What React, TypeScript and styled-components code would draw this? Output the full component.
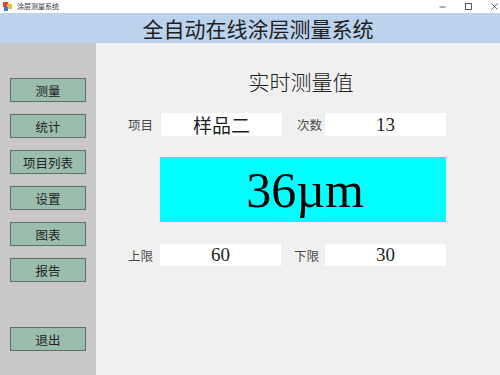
import React from "react";
import styled, { createGlobalStyle } from "styled-components";

const Global = createGlobalStyle`
  html, body { margin: 0; padding: 0; }
  body { width: 500px; height: 375px; overflow: hidden; background: #f0f0f0; }
  * { box-sizing: border-box; }
`;

const cjk = `"Noto Sans CJK SC", "Noto Sans", sans-serif`;
const serif = `"Liberation Serif", "Noto Sans CJK SC", serif`;

const Window = styled.div`
  width: 500px;
  height: 375px;
  display: flex;
  flex-direction: column;
  background: #f0f0f0;
`;

const TitleBar = styled.div`
  height: 13px;
  background: #ffffff;
  display: flex;
  align-items: center;
  padding-left: 3px;
  font-family: ${cjk};
  font-size: 7px;
  color: #333;
`;

const TitleText = styled.span`
  margin-left: 5px;
  line-height: 13px;
`;

const Controls = styled.div`
  margin-left: auto;
  display: flex;
  align-items: center;
  gap: 19px;
  padding-right: 2px;
`;

const Header = styled.div`
  height: 30px;
  background: #bcd3ee;
  display: flex;
  align-items: center;
  justify-content: center;
  font-family: ${cjk};
  font-size: 21px;
  color: #1e1e1e;
  padding-left: 16px;
`;

const Body = styled.div`
  flex: 1;
  display: flex;
`;

const Sidebar = styled.div`
  width: 96px;
  background: #c8c8c8;
  display: flex;
  flex-direction: column;
  padding: 35px 0 0 10px;
  gap: 12px;
`;

const NavButton = styled.div<{ $bottom?: boolean }>`
  width: 76px;
  height: 24px;
  background: #9bbdae;
  border: 1px solid #5f6d66;
  display: flex;
  align-items: center;
  justify-content: center;
  font-family: ${cjk};
  font-size: 12.5px;
  color: #222;
  margin-top: ${(p) => (p.$bottom ? "33px" : "0")};
`;

const Main = styled.div`
  flex: 1;
  display: flex;
  flex-direction: column;
  padding-top: 26px;
`;

const MainTitle = styled.div`
  height: 24px;
  line-height: 24px;
  text-align: center;
  font-family: ${cjk};
  font-weight: 300;
  font-size: 21px;
  color: #222;
  padding-left: 6px;
`;

const Row = styled.div<{ $top: number; $h: number }>`
  display: flex;
  align-items: center;
  margin-top: ${(p) => p.$top}px;
  height: ${(p) => p.$h}px;
  padding-left: 32px;
`;

const Label = styled.span<{ $w: number; $ml?: number }>`
  width: ${(p) => p.$w}px;
  margin-left: ${(p) => p.$ml ?? 0}px;
  font-family: ${cjk};
  font-size: 12.5px;
  color: #4a4a4a;
`;

const ValueBox = styled.div`
  width: 121px;
  height: 100%;
  background: #ffffff;
  display: flex;
  align-items: center;
  justify-content: center;
  font-family: ${serif};
  font-size: 19px;
  color: #1e1e1e;
`;

const BigBox = styled.div`
  margin-top: 21px;
  margin-left: 64px;
  width: 286px;
  height: 65px;
  background: #00ffff;
  display: flex;
  align-items: center;
  justify-content: center;
  font-family: ${serif};
  font-size: 50px;
  color: #000;
  padding-left: 4px;
`;

const AppIcon = () => (
  <svg width="9" height="9" viewBox="0 0 9 9">
    <rect x="0" y="0" width="5" height="5" fill="#e8413a" />
    <rect x="4" y="2" width="5" height="5" fill="#f3c22b" />
    <rect x="1" y="5" width="4" height="4" fill="#3c78d8" />
  </svg>
);

const nav = ["测量", "统计", "项目列表", "设置", "图表", "报告"];

export default function App() {
  return (
    <>
      <Global />
      <Window>
        <TitleBar>
          <AppIcon />
          <TitleText>涂层测量系统</TitleText>
          <Controls>
            <svg width="7" height="7" viewBox="0 0 7 7">
              <line x1="0.5" y1="4" x2="6.5" y2="4" stroke="#333" strokeWidth="0.8" />
            </svg>
            <svg width="7" height="7" viewBox="0 0 7 7">
              <rect x="0.5" y="0.5" width="6" height="6" fill="none" stroke="#333" strokeWidth="0.8" />
            </svg>
            <svg width="7" height="7" viewBox="0 0 7 7">
              <path d="M0.5 0.5 L6.5 6.5 M6.5 0.5 L0.5 6.5" stroke="#333" strokeWidth="0.8" />
            </svg>
          </Controls>
        </TitleBar>
        <Header>全自动在线涂层测量系统</Header>
        <Body>
          <Sidebar>
            {nav.map((n) => (
              <NavButton key={n}>{n}</NavButton>
            ))}
            <NavButton $bottom>退出</NavButton>
          </Sidebar>
          <Main>
            <MainTitle>实时测量值</MainTitle>
            <Row $top={20} $h={23}>
              <Label $w={33}>项目</Label>
              <ValueBox>样品二</ValueBox>
              <Label $w={28} $ml={15}>次数</Label>
              <ValueBox>13</ValueBox>
            </Row>
            <BigBox>36µm</BigBox>
            <Row $top={22} $h={22}>
              <Label $w={32}>上限</Label>
              <ValueBox>60</ValueBox>
              <Label $w={31} $ml={13}>下限</Label>
              <ValueBox>30</ValueBox>
            </Row>
          </Main>
        </Body>
      </Window>
    </>
  );
}
